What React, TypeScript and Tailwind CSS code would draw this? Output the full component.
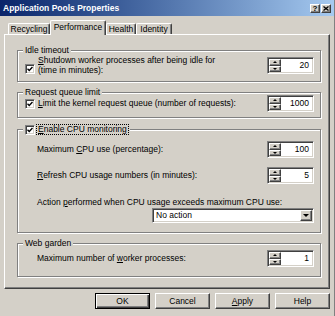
import React from "react";

const raised =
  "border border-t-white border-l-white border-r-[#404040] border-b-[#404040] shadow-[inset_-1px_-1px_0_#808080]";
const sunken =
  "border border-t-[#808080] border-l-[#808080] border-r-white border-b-white shadow-[inset_1px_1px_0_#404040,inset_-1px_-1px_0_#d4d0c8]";

const CheckBox = ({ className = "" }: { className?: string }) => (
  <span
    className={`${sunken} w-[10px] h-[10px] bg-white flex items-center justify-center shrink-0 ${className}`}
  >
    <svg width="6" height="6" viewBox="0 0 7 7">
      <path d="M0.6 3.2 L2.6 5.2 L6.4 1.2" fill="none" stroke="#000" strokeWidth="1.6" />
    </svg>
  </span>
);

const Spinner = ({ value, className = "" }: { value: string; className?: string }) => (
  <div className={`${sunken} flex w-[47px] h-[17px] bg-white shrink-0 ${className}`}>
    <div className="flex flex-col w-[13px] pl-px pt-px pb-px">
      <div className={`${raised} flex-1 bg-[#d4d0c8] flex items-center justify-center`}>
        <span className="w-0 h-0 border-l-[2px] border-r-[2px] border-b-[2px] border-l-transparent border-r-transparent border-b-black" />
      </div>
      <div className={`${raised} flex-1 bg-[#d4d0c8] flex items-center justify-center`}>
        <span className="w-0 h-0 border-l-[2px] border-r-[2px] border-t-[2px] border-l-transparent border-r-transparent border-t-black" />
      </div>
    </div>
    <div className="flex-1 text-right pr-[4px] leading-[15px]">{value}</div>
  </div>
);

const Group = ({
  legend,
  className,
  children,
}: {
  legend: React.ReactNode;
  className: string;
  children: React.ReactNode;
}) => (
  <div
    className={`border border-[#808080] shadow-[inset_1px_1px_0_#fff,1px_1px_0_#fff] ml-[12px] w-[304px] ${className}`}
  >
    <div className="-mt-[6px] ml-[5px] px-[2px] w-fit bg-[#d4d0c8] leading-[11px] h-[11px] flex items-center">
      {legend}
    </div>
    {children}
  </div>
);

const Tab = ({ label, className }: { label: string; className: string }) => (
  <div
    className={`border border-b-0 border-t-white border-l-white border-r-[#404040] shadow-[inset_-1px_0_0_#808080] rounded-t-[2px] flex items-center justify-center ${className}`}
  >
    {label}
  </div>
);

const Button = ({ children, def }: { children: React.ReactNode; def?: boolean }) => (
  <button
    className={
      def
        ? "w-[55px] h-[16px] border border-black shadow-[inset_1px_1px_0_#fff,inset_-1px_-1px_0_#404040,inset_-2px_-2px_0_#808080] bg-[#d4d0c8] leading-[14px]"
        : `w-[55px] h-[16px] ${raised} bg-[#d4d0c8] leading-[14px]`
    }
  >
    {children}
  </button>
);

export default function App() {
  return (
    <div className="w-[335px] h-[316px] bg-[#d4d0c8] text-black text-[8.5px] font-['Liberation_Sans',Arial,sans-serif] flex flex-col overflow-hidden border-r border-r-[#808080]">
      {/* title bar */}
      <div className="h-[16px] flex items-center pl-[3px] pr-[3px] bg-gradient-to-r from-[#0a246a] to-[#a6caf0] text-white font-bold">
        <span>Application Pools Properties</span>
        <div className="ml-auto flex gap-px">
          <div className={`${raised} w-[10px] h-[9px] bg-[#d4d0c8] text-black text-[8px] leading-[7px] flex items-center justify-center`}>
            ?
          </div>
          <div className={`${raised} w-[10px] h-[9px] bg-[#d4d0c8] flex items-center justify-center`}>
            <svg width="6" height="5" viewBox="0 0 6 5">
              <path d="M0.5 0.5 L5.5 4.5 M5.5 0.5 L0.5 4.5" stroke="#000" strokeWidth="1.3" />
            </svg>
          </div>
        </div>
      </div>

      <div className="pl-[4px] pr-[4px] flex flex-col">
        {/* tabs */}
        <div className="mt-[4px] h-[14px] flex items-end pl-[4px]">
          <Tab label="Recycling" className="w-[42px] h-[11px] pt-px" />
          <Tab
            label="Performance"
            className="w-[56px] h-[15px] -mb-px relative z-10 bg-[#d4d0c8] pb-[2px]"
          />
          <Tab label="Health" className="w-[30px] h-[11px] pt-px" />
          <Tab label="Identity" className="w-[36px] h-[11px] pt-px" />
        </div>

        {/* panel */}
        <div className={`${raised} h-[255px] pt-[15px] flex flex-col`}>
          <Group legend="Idle timeout" className="h-[32px]">
            <div className="-mt-px flex items-start pl-[7px] pr-[6px]">
              <CheckBox className="mt-[9px]" />
              <div className="ml-[3px] leading-[10px]">
                <span className="underline">S</span>hutdown worker processes after being idle for
                <br />
                (time in minutes):
              </div>
              <Spinner value="20" className="ml-auto mt-[2px]" />
            </div>
          </Group>

          <Group legend="Request queue limit" className="h-[26px] mt-[10px]">
            <div className="-mt-[3px] flex items-center pl-[7px] pr-[6px]">
              <CheckBox />
              <div className="ml-[3px]">
                <span className="underline">L</span>imit the kernel request queue (number of requests):
              </div>
              <Spinner value="1000" className="ml-auto" />
            </div>
          </Group>

          <Group
            legend={
              <>
                <CheckBox />
                <span className="ml-[2px] px-px outline outline-1 outline-dotted outline-black leading-[9px]">
                  <span className="underline">E</span>nable CPU monitoring
                </span>
              </>
            }
            className="h-[104px] mt-[11px]"
          >
            <div className="pl-[19px] pr-[6px] flex flex-col">
              <div className="mt-[6px] flex items-center">
                <span>
                  Maximum <span className="underline">C</span>PU use (percentage):
                </span>
                <Spinner value="100" className="ml-auto" />
              </div>
              <div className="mt-[9px] flex items-center">
                <span>
                  <span className="underline">R</span>efresh CPU usage numbers (in minutes):
                </span>
                <Spinner value="5" className="ml-auto" />
              </div>
              <div className="mt-[13px] leading-[11px]">
                Action <span className="underline">p</span>erformed when CPU usage exceeds maximum CPU use:
              </div>
              <div className={`${sunken} ml-auto w-[162px] h-[15px] bg-white flex`}>
                <span className="pl-[3px] leading-[13px]">No action</span>
                <div className={`${raised} ml-auto mt-px mr-px mb-px w-[12px] bg-[#d4d0c8] flex items-center justify-center`}>
                  <span className="w-0 h-0 border-l-[3px] border-r-[3px] border-t-[3px] border-l-transparent border-r-transparent border-t-black" />
                </div>
              </div>
            </div>
          </Group>

          <Group legend="Web garden" className="h-[34px] mt-[10px]">
            <div className="mt-px flex items-center pl-[19px] pr-[6px]">
              <span>
                Maximum number of <span className="underline">w</span>orker processes:
              </span>
              <Spinner value="1" className="ml-auto" />
            </div>
          </Group>
        </div>

        {/* buttons */}
        <div className="mt-[4px] flex justify-end gap-[5px]">
          <Button def>OK</Button>
          <Button>Cancel</Button>
          <Button>
            <span className="underline">A</span>pply
          </Button>
          <Button>Help</Button>
        </div>
      </div>
    </div>
  );
}
